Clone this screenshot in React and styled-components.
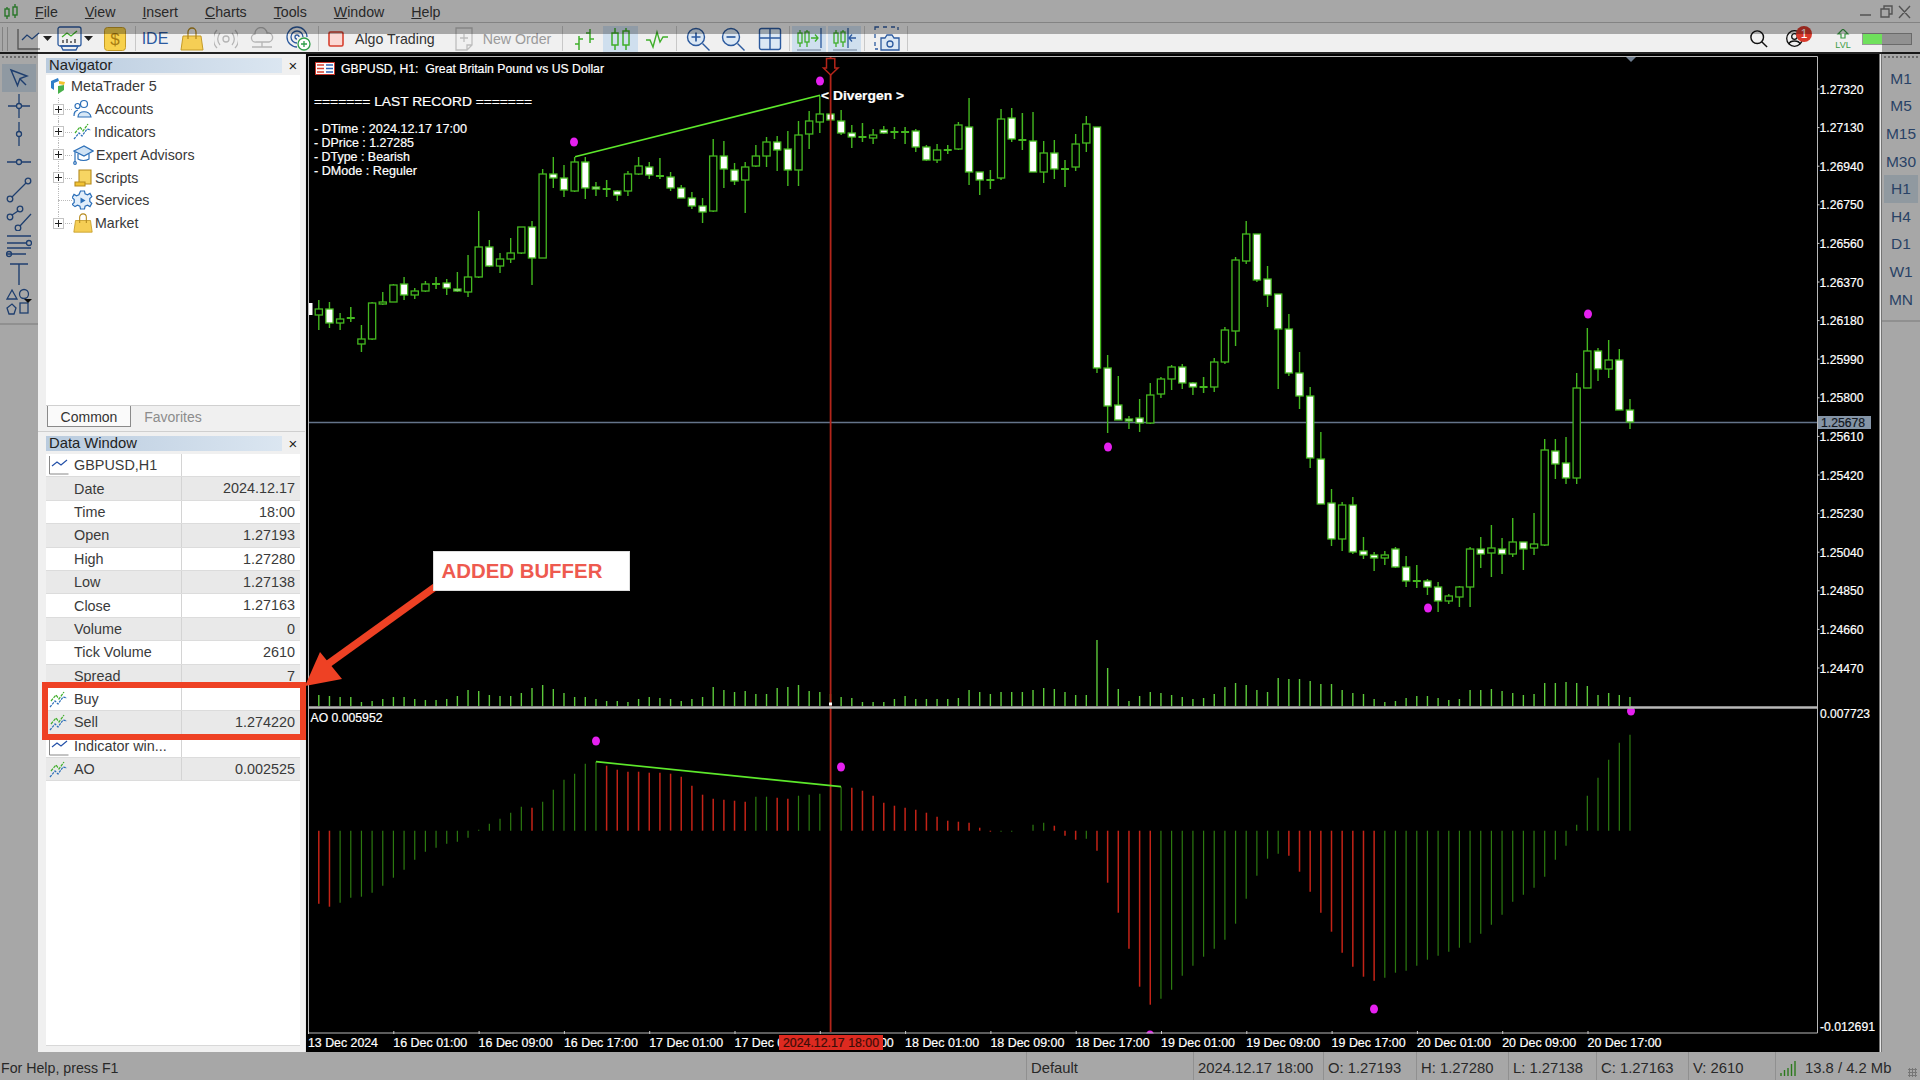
import React from "react";
import styled, { createGlobalStyle } from "styled-components";

const GlobalStyle = createGlobalStyle`
  html, body { margin: 0; padding: 0; background: #f0f0f0; overflow: hidden; }
`;

// [type, high, bodyTop, bodyBottom, low]  type: 0 hollow, 1 white, 2 cross
const CANDLES = [
  [0,300,309,315,330],[1,302,309,323,328],[0,313,319,323,330],[2,307,318,319,322],[0,325,339,344,352],
  [0,302,303,339,340],[0,292,302,304,305],[0,284,285,302,302],[1,277,284,295,300],[0,288,291,295,299],
  [0,281,284,291,292],[2,277,284,284,289],[1,279,283,288,295],[1,272,289,291,292],[0,255,277,292,297],
  [0,211,247,277,278],[1,240,247,266,267],[0,253,259,266,273],[0,238,253,259,263],[0,227,227,253,254],
  [1,221,227,258,285],[0,169,174,258,258],[1,157,174,178,188],[1,165,178,190,197],[0,157,162,191,192],
  [1,157,162,188,199],[1,182,187,189,196],[2,180,189,189,197],[1,190,191,195,201],[0,171,174,191,196],
  [0,157,166,174,175],[1,162,167,175,179],[2,158,176,176,179],[1,172,177,188,191],[1,185,188,198,198],
  [1,192,198,206,209],[1,198,206,212,223],[0,139,156,211,212],[1,141,156,169,188],[1,163,170,181,185],
  [0,162,167,180,213],[0,145,156,166,167],[0,137,142,156,167],[1,136,142,150,171],[1,131,149,170,186],
  [0,121,135,170,186],[0,111,121,134,149],[0,96,114,122,133],[1,114,114,120,120],[1,110,121,133,135],
  [1,125,133,137,148],[2,123,137,137,142],[0,129,135,138,144],[1,126,130,133,134],[2,127,132,132,139],
  [2,127,132,132,144],[1,129,131,147,152],[1,145,147,160,161],[0,144,150,160,163],[2,145,150,150,154],
  [0,122,125,149,150],[1,98,127,172,185],[1,172,172,180,195],[2,170,180,180,189],[0,109,119,178,180],
  [1,108,118,139,142],[2,113,140,140,150],[1,112,141,172,172],[0,141,153,172,183],[1,140,153,169,179],
  [2,160,169,169,187],[0,134,144,167,171],[0,116,124,143,152],[1,127,127,368,373],[1,355,368,406,433],
  [1,376,405,420,420],[1,416,419,421,429],[1,399,418,423,432],[0,383,395,423,424],[0,377,379,394,398],
  [0,365,367,379,390],[1,364,367,383,389],[1,382,383,387,395],[2,377,387,387,393],[0,358,362,387,392],
  [0,327,330,362,364],[0,257,260,331,346],[0,221,234,261,264],[1,234,234,280,282],[1,266,279,295,307],
  [1,294,294,329,389],[1,314,329,373,376],[1,352,373,396,409],[1,387,396,458,468],[1,432,459,504,504],
  [1,489,503,539,546],[0,502,505,539,551],[1,497,505,552,554],[1,537,551,555,559],[1,552,555,558,571],
  [0,551,555,558,565],[1,547,549,567,568],[1,556,567,581,587],[2,565,581,581,588],[1,579,581,587,595],
  [1,582,587,601,612],[0,594,596,601,604],[0,586,587,597,607],[0,547,549,587,607],[1,537,549,554,568],
  [0,525,548,553,577],[1,538,549,554,574],[0,518,542,554,557],[1,542,542,549,570],[0,513,544,548,555],
  [0,439,450,545,546],[1,439,451,464,479],[1,437,463,478,484],[0,373,388,478,484],[0,328,351,388,388],
  [1,348,351,369,381],[0,340,360,369,378],[1,349,360,410,410],[1,399,410,422,429],
];

const VOLUMES = [
  11,10,9,9,4,5,7,9,9,7,6,6,7,10,16,15,11,10,10,13,18,21,17,13,9,9,7,5,5,4,7,9,8,7,5,7,9,19,16,14,15,12,12,18,19,21,15,14,12,
  9,8,4,4,4,7,10,7,7,7,7,8,16,14,12,14,14,14,16,18,17,14,11,11,66,38,17,5,10,14,13,11,9,7,8,12,19,23,21,16,14,28,27,27,25,22,22,
  16,13,12,7,4,5,8,10,10,8,6,7,16,16,17,15,13,11,12,23,23,24,23,20,11,13,11,9,
];

// AO histogram: distance from zero in px (+ is down), r = red
const AO = [
  [73,"r"],[76,"r"],[72],[67],[66],[62],[55],[47],[39],[29],[21],[17],[13],[11],[7],[-1],[-7],[-12],[-18],[-24],[-23,"r"],[-29],
  [-41],[-51],[-57],[-67],[-69],[-65,"r"],[-61,"r"],[-59,"r"],[-59,"r"],[-58,"r"],[-58,"r"],[-57,"r"],[-54,"r"],[-45,"r"],[-36,"r"],
  [-32,"r"],[-31,"r"],[-30,"r"],[-29,"r"],[-34],[-34],[-33,"r"],[-32,"r"],[-35],[-36],[-37],[-41],[-44],[-43,"r"],[-40,"r"],[-35,"r"],
  [-28,"r"],[-25,"r"],[-23,"r"],[-21,"r"],[-18,"r"],[-14,"r"],[-10,"r"],[-9,"r"],[-8,"r"],[-3,"r"],[1,"r"],[1],[1],[0],[-6],[-8],
  [-5,"r"],[5,"r"],[9,"r"],[8],[20,"r"],[52,"r"],[82,"r"],[118,"r"],[156,"r"],[174,"r"],[168],[159],[145],[135],[126],[118],[109],
  [93],[68],[45],[28],[23],[25,"r"],[41,"r"],[61,"r"],[82,"r"],[101,"r"],[122,"r"],[136,"r"],[146,"r"],[150,"r"],[147],[142],[140],
  [135],[129],[125],[121],[117],[112],[103],[94],[84],[71],[64],[57],[46],[29],[15],[-6],[-35],[-53],[-71],[-88],[-96],
];

const TIME_LABELS = [
  "13 Dec 2024","16 Dec 01:00","16 Dec 09:00","16 Dec 17:00","17 Dec 01:00","17 Dec 09:00","17 Dec 17:00","18 Dec 01:00",
  "18 Dec 09:00","18 Dec 17:00","19 Dec 01:00","19 Dec 09:00","19 Dec 17:00","20 Dec 01:00","20 Dec 09:00","20 Dec 17:00",
];

const DOTS = [[574,142],[820,81],[1108,447],[1428,608],[1588,314],[596,741],[841,767],[1374,1009],[1150,1035],[1631,711]];

const barX = (i) => 318.8 + i * 10.66;

const MENU = [["F","ile"],["V","iew"],["I","nsert"],["C","harts"],["T","ools"],["W","indow"],["H","elp"]];
const TIMEFRAMES = ["M1","M5","M15","M30","H1","H4","D1","W1","MN"];

const DATA_ROWS = [
  ["chart","GBPUSD,H1",""],
  [null,"Date","2024.12.17"],
  [null,"Time","18:00"],
  [null,"Open","1.27193"],
  [null,"High","1.27280"],
  [null,"Low","1.27138"],
  [null,"Close","1.27163"],
  [null,"Volume","0"],
  [null,"Tick Volume","2610"],
  [null,"Spread","7"],
  ["ind","Buy",""],
  ["ind","Sell","1.274220"],
  ["chart","Indicator win...",""],
  ["ind","AO","0.002525"],
];

const Page = styled.div`
  position: relative;
  width: 1920px;
  height: 1080px;
  overflow: hidden;
  display: grid;
  grid-template-rows: 23px 31px 998px 28px;
  background: #f0f0f0;
  color: #3a3a3a;
  font-family: "Liberation Sans", Arial, sans-serif;
`;

const MenuBar = styled.div`
  display: flex;
  align-items: center;
  padding: 2px 0 0 3px;
  border-bottom: 1px solid #bcbcbc;
  box-sizing: border-box;
`;

const MenuItem = styled.span`
  font-size: 14.2px;
  margin-left: 27px;
  &:first-of-type { margin-left: 16px; }
`;

const WindowButtons = styled.div`
  margin-left: auto;
  display: flex;
  align-items: center;
  padding-right: 8px;
`;

const Toolbar = styled.div`
  display: flex;
  align-items: center;
  padding: 2px 0 0 2px;
  border-bottom: 2px solid #222;
  box-sizing: border-box;
`;

const Grip = styled.div`
  width: 4px;
  height: 24px;
  border-left: 1px solid #bbb;
  border-right: 1px solid #bbb;
  margin-right: 9px;
`;

const Tool = styled.div`
  flex: none;
  display: flex;
  align-items: center;
  justify-content: center;
  width: ${(p) => p.$w}px;
  height: 26px;
  margin-left: ${(p) => p.$ml || 0}px;
  background: ${(p) => (p.$on ? "#cfdfee" : "transparent")};
`;

const ToolLabel = styled.span`
  flex: none;
  font-size: 14.2px;
  margin-left: ${(p) => p.$ml || 0}px;
  color: ${(p) => (p.$off ? "#9a9a9a" : "#333")};
`;

const IdeLabel = styled.span`
  font-size: 16px;
  color: #2b5aa0;
`;

const ToolSep = styled.div`
  flex: none;
  width: 1px;
  height: 25px;
  margin-left: ${(p) => p.$ml || 0}px;
  background: #c8c8c8;
`;

const ToolRight = styled.div`
  margin-left: auto;
  display: flex;
  align-items: center;
  padding-right: 8px;
`;

const Badge = styled.span`
  position: absolute;
  right: -9px;
  top: -4px;
  width: 16px;
  height: 16px;
  border-radius: 50%;
  background: #d8392b;
  color: #fff;
  font-size: 12px;
  line-height: 16px;
  text-align: center;
`;

const UserBox = styled.div`
  position: relative;
  width: 17px;
  height: 17px;
  margin-left: 18px;
`;

const LevelBar = styled.div`
  width: 50px;
  height: 12px;
  margin-left: 10px;
  background: linear-gradient(to right, #6fe05c 40%, #d0d0d0 40%);
  border: 1px solid #999;
  box-sizing: border-box;
`;

const Body = styled.div`
  display: grid;
  grid-template-columns: 38px 268px 1576px 38px;
  min-height: 0;
`;

const SideBar = styled.div`
  display: flex;
  flex-direction: column;
  align-items: center;
  padding-top: ${(p) => p.$pad}px;
`;

const SideGrip = styled.div`
  position: absolute;
  top: 56px;
  width: 34px;
  height: 3px;
  border-top: 2px dotted #999;
`;

const SideTool = styled.div`
  width: 34px;
  height: 28px;
  display: flex;
  align-items: center;
  justify-content: center;
  background: ${(p) => (p.$on ? "#cddbe9" : "transparent")};
`;

const SideDivider = styled.div`
  width: 100%;
  margin-top: 7px;
  border-top: 2px solid #cfcfcf;
`;

const FrameButton = styled.div`
  width: 34px;
  height: 27.6px;
  display: flex;
  align-items: center;
  justify-content: center;
  font-size: 15.5px;
  color: #3c5f92;
  background: ${(p) => (p.$on ? "#cfdbe6" : "transparent")};
`;

const LeftColumn = styled.div`
  display: flex;
  flex-direction: column;
  min-height: 0;
  border-right: 1px solid #e4e4e4;
`;

const Navigator = styled.section`
  height: 378px;
  padding: 4px 5px 4px 8px;
  box-sizing: border-box;
  display: flex;
  flex-direction: column;
  border-bottom: 1px solid #cfcfcf;
`;

const PanelHeader = styled.div`
  flex: none;
  display: flex;
  align-items: center;
  height: 15px;
  font-size: 14.8px;
  color: #222;
`;

const PanelTitle = styled.div`
  width: 236px;
  height: 100%;
  padding-left: 3px;
  box-sizing: border-box;
  line-height: 15px;
  background: linear-gradient(to right, #b9cbde, #dbe6f1);
`;

const PanelClose = styled.div`
  flex: 1;
  text-align: center;
  font-size: 15px;
  line-height: 15px;
  padding-left: 4px;
`;

const Tree = styled.div`
  flex: 1;
  margin-top: 2px;
  background: #fff;
`;

const TreeRoot = styled.div`
  display: flex;
  align-items: center;
  height: 22.8px;
  padding-left: 3px;
  gap: 4px;
  font-size: 14.4px;
`;

const TreeRow = styled.div`
  position: relative;
  display: flex;
  align-items: center;
  height: 22.8px;
  font-size: 14.2px;
  padding-left: ${(p) => (p.$leaf ? 26 : 7)}px;
  &::before {
    content: "";
    position: absolute;
    left: 12px;
    top: 0;
    height: ${(p) => (p.$last ? "50%" : "100%")};
    border-left: 1px dotted #bbb;
  }
  &::after {
    content: "";
    position: absolute;
    left: 12px;
    top: 50%;
    width: 14px;
    border-top: 1px dotted #bbb;
  }
`;

const Expander = styled.span`
  position: relative;
  z-index: 1;
  width: 11px;
  height: 11px;
  margin-right: 9px;
  box-sizing: border-box;
  border: 1px solid #c4c4c4;
  background: linear-gradient(#222, #222) center / 7px 1px no-repeat,
    linear-gradient(#222, #222) center / 1px 7px no-repeat, #fff;
`;

const TreeLabel = styled.span`
  margin-left: 2px;
`;

const Tabs = styled.div`
  flex: none;
  display: flex;
  height: 21px;
  border-top: 1px solid #d0d0d0;
  font-size: 14px;
`;

const Tab = styled.div`
  display: flex;
  align-items: center;
  justify-content: center;
  padding-top: 1px;
  margin-left: ${(p) => (p.$on ? 1 : 0)}px;
  width: 84px;
  color: ${(p) => (p.$on ? "#333" : "#8c8c8c")};
  background: ${(p) => (p.$on ? "#fafafa" : "transparent")};
  border: ${(p) => (p.$on ? "1px solid #8a8a8a" : "none")};
  border-top: none;
  box-sizing: border-box;
`;

const DataPanel = styled.section`
  flex: 1;
  padding: 4px 5px 6px 8px;
  display: flex;
  flex-direction: column;
  min-height: 0;
`;

const DataBody = styled.div`
  flex: 1;
  margin-top: 3px;
  background: #fff;
  border-bottom: 1px solid #d8d8d8;
`;

const DataRow = styled.div`
  display: grid;
  grid-template-columns: 136px 1fr;
  height: 23.4px;
  box-sizing: border-box;
  font-size: 14.4px;
  line-height: 22px;
  border-bottom: 1px solid #dcdcdc;
  background: ${(p) => (p.$alt ? "#e9e9e9" : "#fff")};
`;

const DataName = styled.div`
  display: flex;
  align-items: center;
  padding-left: 3px;
  border-right: 1px solid #d4d4d4;
  white-space: nowrap;
`;

const IconSlot = styled.span`
  flex: none;
  display: flex;
  align-items: center;
  width: 25px;
`;

const DataValue = styled.div`
  text-align: right;
  padding-right: 5px;
`;

const ChartArea = styled.div`
  background: #000;
  min-height: 0;
`;

const ChartSvg = styled.svg`
  display: block;
  width: 1576px;
  height: 998px;
`;

const ChartText = styled.text`
  font-family: "Liberation Sans", Arial, sans-serif;
  font-size: ${(p) => p.$size || 12.4}px;
  font-weight: ${(p) => (p.$bold ? 700 : 400)};
  fill: ${(p) => p.$fill || "#fff"};
  stroke: ${(p) => p.$fill || "#fff"};
  stroke-width: 0.2px;
  white-space: pre;
`;

const StatusBar = styled.div`
  display: flex;
  align-items: center;
  font-size: 14.2px;
`;

const StatusHelp = styled.div`
  flex: 1;
  padding: 3px 0 0 1px;
`;

const StatusCell = styled.div`
  flex: none;
  display: flex;
  align-items: center;
  gap: 8px;
  width: ${(p) => p.$w}px;
  height: 100%;
  box-sizing: border-box;
  padding: 3px 0 0 4px;
  font-size: 14.8px;
  border-left: 1px solid #cfcfcf;
`;

const Spotlight = styled.div`
  position: absolute;
  left: 38px;
  top: 34px;
  width: 1844px;
  height: 1018px;
  box-shadow: 0 0 0 3000px rgba(0, 0, 0, 0.3);
  pointer-events: none;
`;

const HighlightBox = styled.div`
  position: absolute;
  left: 41.5px;
  top: 681.5px;
  width: 264px;
  height: 58px;
  box-sizing: border-box;
  border: 6.4px solid #ee4124;
  pointer-events: none;
`;

const Callout = styled.div`
  position: absolute;
  left: 432.5px;
  top: 551px;
  width: 197px;
  height: 40px;
  box-sizing: border-box;
  padding-left: 8px;
  line-height: 38px;
  background: #fff;
  border: 1px solid #ddd;
  color: #ee5a4f;
  font-size: 20.4px;
  font-weight: 700;
  white-space: nowrap;
`;

const ArrowSvg = styled.svg`
  position: absolute;
  left: 300px;
  top: 545px;
  width: 145px;
  height: 150px;
  pointer-events: none;
`;

const Svg = ({ s = 24, w, h, view = "0 0 24 24", children, ...rest }) => (
  <svg width={w || s} height={h || s} viewBox={view} fill="none" {...rest}>
    {children}
  </svg>
);

const BLUE = "#2c5a9e";
const GREEN = "#3fae2a";

const CaretDown = () => (
  <Svg w={9} h={5} view="0 0 9 5"><path d="M0 0h9L4.5 5z" fill="#222" /></Svg>
);

const AppLogo = () => (
  <Svg w={16} h={18} view="0 0 16 18" stroke="#3aa83a" strokeWidth="1.4">
    <path d="M4 4v12M12 1v14" /><rect x="2" y="6" width="4" height="7" fill="#f0f0f0" /><rect x="10" y="4" width="4" height="8" fill="#f0f0f0" />
  </Svg>
);

const LineChartIcon = () => (
  <Svg w={24} h={24} stroke={BLUE} strokeWidth="1.3">
    <path d="M1 2v20h22" stroke="#777" /><path d="M5 13l5-5 5 4 7-6" />
  </Svg>
);

const TemplateIcon = () => (
  <Svg w={25} h={26} view="0 0 25 26" stroke={BLUE} strokeWidth="1.3">
    <rect x="1" y="1" width="23" height="19" rx="2" />
    <path d="M5 11l5-4 4 3 6-5" stroke={GREEN} />
    <path d="M6 17v-3M10 17v-4M14 17v-2M18 17v-4" stroke="#333" />
    <path d="M6 24h13l2-4H4z" />
  </Svg>
);

const DollarIcon = () => (
  <Svg w={22} h={24} view="0 0 22 24">
    <rect x=".5" y=".5" width="21" height="23" rx="3" fill="#f7d14c" stroke="#c49b28" />
    <text x="11" y="18" textAnchor="middle" fontSize="17" fontFamily="Liberation Sans" fill="#a87d12">$</text>
  </Svg>
);

const BagIcon = ({ s = 24 }) => (
  <Svg s={s}>
    <path d="M3 9h18l2 14H1z" fill="#f5ce55" stroke="#c49b28" />
    <path d="M8 12V5a4 4 0 018 0v7" stroke="#b58a1e" strokeWidth="1.3" />
  </Svg>
);

const SignalIcon = () => (
  <Svg s={24} stroke="#b5b5b5" strokeWidth="1.3">
    <circle cx="12" cy="12" r="3" />
    <path d="M6 6a9 9 0 000 12M18 6a9 9 0 010 12M3 3a13 13 0 000 18M21 3a13 13 0 010 18" />
  </Svg>
);

const CloudIcon = () => (
  <Svg s={24} stroke="#b5b5b5" strokeWidth="1.3">
    <path d="M6 15a4 4 0 01-1-8 6 6 0 0112-1 4.5 4.5 0 012 9zM12 15v5M2 20h20" />
  </Svg>
);

const GlobePlusIcon = () => (
  <Svg s={25} view="0 0 25 25" stroke={BLUE} strokeWidth="1.3">
    <path d="M11 21a10 10 0 1110-10" /><path d="M11 17a6 6 0 116-6" /><path d="M11 13a2 2 0 112-2" />
    <circle cx="18" cy="18" r="6" fill="#fff" stroke="#2f9e4a" />
    <path d="M18 15v6M15 18h6" stroke="#2f9e4a" />
  </Svg>
);

const AlgoIcon = () => (
  <Svg s={16} view="0 0 16 16"><rect x="1" y="1" width="14" height="14" rx="1.5" fill="#fbd9d4" stroke="#d6402f" strokeWidth="1.6" /></Svg>
);

const OrderIcon = () => (
  <Svg w={18} h={24} view="0 0 18 24" stroke="#bdbdbd" strokeWidth="1.3">
    <path d="M1 1h16v17l-5 5H1zM9 7v8M5 11h8M17 18h-5v5" />
  </Svg>
);

const BarsIcon = () => (
  <Svg s={24} stroke={GREEN} strokeWidth="1.5">
    <path d="M6 9v14M6 17H2M6 12h4M17 2v14M17 6h-4M17 12h4" />
  </Svg>
);

const CandlesIcon = ({ w = 22, h = 24 }) => (
  <Svg w={w} h={h} view="0 0 22 24" stroke={GREEN} strokeWidth="1.5">
    <path d="M5 1v22M16 1v22" /><rect x="2" y="6" width="6" height="12" fill="#cfdfee" /><rect x="13" y="4" width="6" height="14" fill="#cfdfee" />
  </Svg>
);

const ZigZagIcon = () => (
  <Svg s={24} stroke={GREEN} strokeWidth="1.4"><path d="M1 13h4l3 7 4-15 3 10 3-5h5" /></Svg>
);

const ZoomIcon = ({ plus }) => (
  <Svg s={24} stroke={BLUE} strokeWidth="1.4">
    <circle cx="10" cy="10" r="8.5" fill="#dce8f4" />
    <path d="M16.5 16.5l7 7" />
    <path d={plus ? "M10 5.5v9M5.5 10h9" : "M5.5 10h9"} strokeWidth="1.7" />
  </Svg>
);

const TileIcon = () => (
  <Svg s={24} stroke={BLUE} strokeWidth="1.4">
    <rect x="1.5" y="1.5" width="21" height="21" rx="2" fill="#dce8f4" /><path d="M1.5 11h21M12 1.5v21" />
  </Svg>
);

const ScrollIcon = ({ back }) => (
  <Svg w={26} h={24} view="0 0 26 24">
    <g stroke={GREEN} strokeWidth="1.3" fill="#cfdfee">
      <path d="M4 3v17M11 3v17" /><rect x="2" y="6" width="4" height="10" /><rect x="9" y="5" width="4" height="10" />
    </g>
    <path d={back ? "M24 11h-7m3-3.500l-3 3.500 3 3.500" : "M15 11h7m-3-3.500l3 3.500-3 3.500"} stroke={back ? BLUE : GREEN} strokeWidth="1.3" />
    <path d={back ? "M16 1v20" : "M25 1v20"} stroke={BLUE} strokeWidth="1.3" />
    <path d="M1 23h24" stroke="#8a9bb0" strokeWidth="1.4" />
  </Svg>
);

const ShotIcon = () => (
  <Svg w={27} h={26} view="0 0 27 26" stroke={BLUE} strokeWidth="1.3">
    <path d="M1 4V1h4M9 1h4M17 1h4M24 1v3M1 8v4M1 16v4M1 23h3" />
    <path d="M7 12h4l2-3h5l2 3h5v12H7z" fill="#dce8f4" />
    <circle cx="16" cy="18" r="3" />
  </Svg>
);

const SearchIcon = () => (
  <Svg s={18} view="0 0 20 20" stroke="#111" strokeWidth="1.6"><circle cx="8" cy="8" r="7" /><path d="M13 13l6 6" /></Svg>
);

const UserIcon = () => (
  <Svg s={17} view="0 0 17 17" stroke="#111" strokeWidth="1.3">
    <circle cx="8.500" cy="8.500" r="7.800" /><circle cx="8.500" cy="6.500" r="2.800" /><path d="M3 14c1-4 10-4 11 0" />
  </Svg>
);

const LevelIcon = () => (
  <Svg w={18} h={20} view="0 0 18 20">
    <path d="M9 0l5 5h-3v4H7V5H4z" fill="none" stroke="#3c9c45" strokeWidth="1.2" />
    <text x="9" y="19" textAnchor="middle" fontSize="9" fontFamily="Liberation Sans" fill="#3c9c45">LVL</text>
  </Svg>
);

const CursorTool = () => (
  <Svg s={20} view="0 0 20 20" stroke={BLUE} strokeWidth="1.4"><path d="M2 2l16 6-7 2.500-2.500 7z" /><path d="M11 11l6 6" /></Svg>
);
const CrossTool = () => (
  <Svg s={24} stroke={BLUE} strokeWidth="1.3"><circle cx="12" cy="12" r="2.500" /><path d="M12 0v9.500M12 14.500V24M1 12h8.500M14.500 12H23" /></Svg>
);
const VLineTool = () => (
  <Svg s={24} stroke={BLUE} strokeWidth="1.3"><circle cx="12" cy="12" r="2.500" /><path d="M12 0v9.500M12 14.500V24" /></Svg>
);
const HLineTool = () => (
  <Svg s={24} stroke={BLUE} strokeWidth="1.3"><circle cx="12" cy="12" r="2.500" /><path d="M0 12h9.500M14.500 12H24" /></Svg>
);
const TrendTool = () => (
  <Svg s={26} view="0 0 26 26" stroke={BLUE} strokeWidth="1.3"><circle cx="4" cy="22" r="2.800" /><circle cx="22" cy="4" r="2.800" /><path d="M6 20L20 6" /></Svg>
);
const FiboTool = () => (
  <Svg s={26} view="0 0 26 26" stroke={BLUE} strokeWidth="1.3"><circle cx="4" cy="12" r="2.800" /><circle cx="14" cy="4" r="2.800" /><circle cx="12" cy="23" r="2.800" /><path d="M6 10l6-4M14 21L25 9" /></Svg>
);
const ChannelTool = () => (
  <Svg s={26} view="0 0 26 26" stroke={BLUE} strokeWidth="1.3"><path d="M1 3h24M1 10h19M1 21h19M1 15h24" /><circle cx="23" cy="10" r="2.500" /><circle cx="3" cy="21" r="2.500" /></Svg>
);
const TextTool = () => (
  <Svg s={24} stroke={BLUE} strokeWidth="1.4"><path d="M3 2h18M12 2v21" /></Svg>
);
const ShapesTool = () => (
  <Svg s={28} view="0 0 28 28" stroke={BLUE} strokeWidth="1.3">
    <path d="M7 2l5 9H2z" /><circle cx="19" cy="6" r="4.500" /><path d="M2 20l5-4 4 4-2 6H4z" /><rect x="15" y="15" width="8" height="10" />
    <path d="M19 11h8l-4 4z" fill="#111" stroke="none" />
  </Svg>
);

const MtLogo = () => (
  <Svg s={18} view="0 0 18 18">
    <path d="M9 1L2 4v7l3 2V6l5-2z" fill="#2f7fc9" /><path d="M10 4l6 1-1 3-5-1z" fill="#f2c12e" />
    <path d="M15 8v5l-6 4V9z" fill="#47b04b" />
  </Svg>
);

const AccountsIcon = () => (
  <Svg s={20} view="0 0 20 20" stroke="#2c6fb8" strokeWidth="1.2">
    <circle cx="11" cy="5" r="3.500" /><circle cx="4.500" cy="7" r="2.500" />
    <path d="M5 18c0-7 12-7 13 0zM1 17c0-4 1-5 4-6" fill="#d8e8f6" />
  </Svg>
);

const IndicatorIcon = () => (
  <Svg s={19} view="0 0 19 19" strokeWidth="1.2">
    <path d="M1 17l5-6 3 3 5-7 4 1" stroke="#2c6fb8" strokeDasharray="2.500 1" />
    <path d="M2 11l5-6 3 4 5-7" stroke="#3fae2a" strokeDasharray="3 1" />
  </Svg>
);

const AdvisorIcon = () => (
  <Svg s={21} view="0 0 21 21" stroke="#2c6fb8" strokeWidth="1.2">
    <path d="M1 7l10-5 9 5-9 5z" fill="#cfe2f4" /><path d="M5 10v5c3 2 8 2 11 0v-5M2 8v10" />
    <circle cx="2" cy="19" r="1.300" />
  </Svg>
);

const ScriptIcon = () => (
  <Svg s={20} view="0 0 20 20" stroke="#b58a1e" strokeWidth="1.100">
    <path d="M6 2h12v14H6z" fill="#f7d563" /><path d="M2 14h10v4H2z" fill="#f1c232" />
  </Svg>
);

const ServiceIcon = () => (
  <Svg s={21} view="0 0 21 21" stroke="#2c6fb8" strokeWidth="1.200">
    <path d="M8.500 1h4l.6 2.800 2.400 1 2.500-1.400 1.800 3.200-2 2v2.800l2 2-1.800 3.200-2.500-1.400-2.400 1-.6 2.800h-4l-.6-2.800-2.400-1-2.500 1.400L.2 14.400l2-2V9.600l-2-2L2 4.400l2.500 1.400 2.400-1z" fill="#e2eefa" />
    <path d="M8.500 7.500v6l5-3z" fill="#2c6fb8" stroke="none" />
  </Svg>
);

const SmallLineIcon = () => (
  <Svg s={20} view="0 0 20 20"><path d="M.5 1v18h19" stroke="#888" /><path d="M3 11l5-4 4 3 6-5" stroke="#2350a8" strokeWidth="1.200" /></Svg>
);

const StatusBars = () => (
  <Svg w={17} h={16} view="0 0 17 16" stroke="#3fae2a" strokeWidth="1.400">
    <path d="M1 16v-3M4.500 16v-6M8 16V8M11.500 16V4M15 16V1" />
  </Svg>
);

const StatusGrip = styled.div`
  width: 9px;
  height: 9px;
  margin-left: auto;
  margin-right: 3px;
  align-self: flex-end;
  margin-bottom: 3px;
  background: radial-gradient(#aaa 1px, transparent 1.200px) 0 0 / 3px 3px;
`;

const Candle = ({ c, i }) => {
  const [type, hi, top, bot, lo] = c;
  const x = barX(i);
  const green = "#44b81f";
  if (type === 2) {
    return (
      <g stroke={green} strokeWidth="1.500">
        <path d={`M${x} ${hi}V${lo}`} />
        <path d={`M${x - 4} ${top}H${x + 4}`} strokeWidth="2" />
      </g>
    );
  }
  return (
    <g stroke={green}>
      <path d={`M${x} ${hi}V${lo}`} strokeWidth="1.400" />
      <rect x={x - 3.6} y={top} width="7.200" height={Math.max(bot - top, 2)} fill={type ? "#fff" : "#000"} strokeWidth="1.300" />
    </g>
  );
};

const PriceChart = () => (
  <ChartSvg viewBox="306 54 1576 998">
    <rect x="309" y="303" width="3.500" height="12" fill="#fff" />
    <path d="M309 422.500H1817" stroke="#64748a" strokeWidth="1.600" />

    {CANDLES.map((c, i) => <Candle key={i} c={c} i={i} />)}

    {VOLUMES.map((h, i) => (
      <path key={i} d={`M${barX(i)} 706V${706 - h}`} stroke="#5cc93a" strokeWidth="1.400" />
    ))}

    {AO.map(([v, col], i) => (
      v !== 0 && <path key={i} d={`M${barX(i)} 830.700V${830.7 + v}`} stroke={col ? "#c42317" : "#2c7a10"} strokeWidth={col ? 1.5 : 1.2} />
    ))}

    <path d="M830.600 57V1032" stroke="#b3251a" strokeWidth="1.800" />
    <path d="M826.500 58.500H834.800V68H838L830.700 75 823.500 68H826.500Z" fill="#000" stroke="#b3251a" strokeWidth="1.500" />
    <path d="M1626 57H1636L1631 62Z" fill="#6f7e90" />

    {/* divergence lines */}
    <path d="M575 156.700L820 95.300" stroke="#5de82b" strokeWidth="1.700" />
    <path d="M596 761.700L841 786.700" stroke="#5de82b" strokeWidth="1.700" />

    {DOTS.map(([x, y], i) => <ellipse key={i} cx={x} cy={y} rx="4" ry="4.500" fill="#e620f0" />)}

    {/* the axis strip hides whatever runs past the plot */}
    <rect x="306" y="1033.500" width="1511" height="18.500" fill="#000" />
    <g stroke="#b8b8b8" fill="none">
      <path d="M308.500 56.500H1817.500V1033H308.500Z" />
      <path d="M308 707.500H1817" strokeWidth="2.400" />
      <path d="M1880.500 54V1052" stroke="#e8e8e8" strokeWidth="2" />
    </g>
    <rect x="829" y="702.500" width="3" height="3" fill="#fff" />

    {/* title */}
    <rect x="315.500" y="62.500" width="19" height="12" fill="#fff" stroke="#c8352a" />
    <path d="M317 65h7M317 68.500h7M317 72h7" stroke="#d6402f" strokeWidth="1.500" />
    <path d="M326 65h7M326 68.500h7M326 72h7" stroke="#2e63b5" strokeWidth="1.500" />
    <ChartText x="341" y="72.500" textLength="263" lengthAdjust="spacingAndGlyphs">{"GBPUSD, H1:  Great Britain Pound vs US Dollar"}</ChartText>
    <ChartText x="314" y="105.500" textLength="218" lengthAdjust="spacingAndGlyphs">======= LAST RECORD =======</ChartText>
    <ChartText x="314" y="133" textLength="153" lengthAdjust="spacingAndGlyphs">- DTime : 2024.12.17 17:00</ChartText>
    <ChartText x="314" y="147" textLength="100" lengthAdjust="spacingAndGlyphs">- DPrice : 1.27285</ChartText>
    <ChartText x="314" y="160.500" textLength="96" lengthAdjust="spacingAndGlyphs">- DType : Bearish</ChartText>
    <ChartText x="314" y="174.500" textLength="103" lengthAdjust="spacingAndGlyphs">- DMode : Reguler</ChartText>
    <ChartText x="821" y="99.500" $bold textLength="83" lengthAdjust="spacingAndGlyphs">{"< Divergen >"}</ChartText>
    <ChartText x="310.500" y="721.500" textLength="72" lengthAdjust="spacingAndGlyphs">AO 0.005952</ChartText>

    {/* price axis */}
    {Array.from({ length: 16 }, (_, i) => {
      const y = 89 + i * 38.6;
      return (
        <g key={i}>
          <path d={`M1817 ${y}h2.500`} stroke="#ccc" />
          <ChartText x="1819.500" y={y + 4.5} textLength="44" lengthAdjust="spacingAndGlyphs">{(1.2732 - i * 0.0019).toFixed(5)}</ChartText>
        </g>
      );
    })}
    <rect x="1818" y="416" width="53" height="13" fill="#8494a6" />
    <ChartText x="1821" y="427" $fill="#10161d" textLength="44" lengthAdjust="spacingAndGlyphs">1.25678</ChartText>
    <ChartText x="1820" y="718" textLength="50" lengthAdjust="spacingAndGlyphs">0.007723</ChartText>
    <ChartText x="1820" y="1031" textLength="55" lengthAdjust="spacingAndGlyphs">-0.012691</ChartText>

    {/* time axis */}
    {TIME_LABELS.map((t, i) => {
      const x = 308 + i * 85.3;
      return (
        <g key={t}>
          <path d={`M${x + 0.5} 1031v3`} stroke="#ccc" />
          <ChartText x={x} y="1046.500" textLength={i === 0 ? 70 : 74} lengthAdjust="spacingAndGlyphs">{t}</ChartText>
        </g>
      );
    })}
    <rect x="779" y="1035" width="104" height="15" fill="#dd2a20" />
    <ChartText x="783" y="1046.500" $fill="#3a0d08" textLength="96" lengthAdjust="spacingAndGlyphs">2024.12.17 18:00</ChartText>
  </ChartSvg>
);

const NAV_ITEMS = [
  [<AccountsIcon />, "Accounts"],
  [<IndicatorIcon />, "Indicators"],
  [<AdvisorIcon />, "Expert Advisors"],
  [<ScriptIcon />, "Scripts"],
  [<ServiceIcon />, "Services", true],
  [<BagIcon s={20} />, "Market"],
];

const SIDE_TOOLS = [CursorTool, CrossTool, VLineTool, HLineTool, TrendTool, FiboTool, ChannelTool, TextTool, ShapesTool];

export default function App() {
  return (
    <Page>
      <GlobalStyle />
      <MenuBar>
        <AppLogo />
        {MENU.map(([k, rest]) => (
          <MenuItem key={k}><u>{k}</u>{rest}</MenuItem>
        ))}
        <WindowButtons>
          <Svg w={54} h={14} view="0 0 50 14" stroke="#777" strokeWidth="1.400">
            <path d="M0 10h11M21 4h8v8h-8zM24 4V1h8v8h-3M39 1l11 12M50 1L39 13" />
          </Svg>
        </WindowButtons>
      </MenuBar>

      <Toolbar>
        <Grip />
        <Tool $w={24}><LineChartIcon /></Tool>
        <Tool $w={9} $ml={2}><CaretDown /></Tool>
        <Tool $w={25} $ml={5}><TemplateIcon /></Tool>
        <Tool $w={9} $ml={2}><CaretDown /></Tool>
        <Tool $w={22} $ml={11}><DollarIcon /></Tool>
        <ToolSep $ml={9} />
        <Tool $w={24} $ml={7}><IdeLabel>IDE</IdeLabel></Tool>
        <Tool $w={24} $ml={13}><BagIcon /></Tool>
        <Tool $w={25} $ml={9}><SignalIcon /></Tool>
        <Tool $w={24} $ml={12}><CloudIcon /></Tool>
        <Tool $w={25} $ml={12}><GlobePlusIcon /></Tool>
        <ToolSep $ml={7} />
        <Tool $w={16} $ml={9}><AlgoIcon /></Tool>
        <ToolLabel $ml={11}>Algo Trading</ToolLabel>
        <Tool $w={18} $ml={20}><OrderIcon /></Tool>
        <ToolLabel $ml={10} $off>New Order</ToolLabel>
        <ToolSep $ml={11} />
        <Tool $w={24} $ml={10}><BarsIcon /></Tool>
        <Tool $w={35} $ml={6} $on><CandlesIcon /></Tool>
        <Tool $w={24} $ml={7}><ZigZagIcon /></Tool>
        <ToolSep $ml={7} />
        <Tool $w={24} $ml={9}><ZoomIcon plus /></Tool>
        <Tool $w={24} $ml={11}><ZoomIcon /></Tool>
        <Tool $w={24} $ml={13}><TileIcon /></Tool>
        <ToolSep $ml={7} />
        <Tool $w={34} $ml={2} $on><ScrollIcon /></Tool>
        <Tool $w={33} $ml={2} $on><ScrollIcon back /></Tool>
        <ToolSep $ml={3} />
        <Tool $w={27} $ml={9}><ShotIcon /></Tool>
        <ToolSep $ml={6} />
        <ToolRight>
          <SearchIcon />
          <UserBox><UserIcon /><Badge>1</Badge></UserBox>
          <Tool $w={18} $ml={31}><LevelIcon /></Tool>
          <LevelBar />
        </ToolRight>
      </Toolbar>

      <Body>
        <SideBar $pad={10}>
          <SideGrip />
          {SIDE_TOOLS.map((Icon, i) => (
            <SideTool key={i} $on={i === 0}><Icon /></SideTool>
          ))}
          <SideDivider />
        </SideBar>

        <LeftColumn>
          <Navigator>
            <PanelHeader><PanelTitle>Navigator</PanelTitle><PanelClose>×</PanelClose></PanelHeader>
            <Tree>
              <TreeRoot><MtLogo />MetaTrader 5</TreeRoot>
              {NAV_ITEMS.map(([icon, label, leaf], i) => (
                <TreeRow key={label} $leaf={leaf} $last={i === NAV_ITEMS.length - 1}>
                  {!leaf && <Expander />}
                  {icon}
                  <TreeLabel>{label}</TreeLabel>
                </TreeRow>
              ))}
            </Tree>
            <Tabs>
              <Tab $on>Common</Tab>
              <Tab>Favorites</Tab>
            </Tabs>
          </Navigator>
          <DataPanel>
            <PanelHeader><PanelTitle>Data Window</PanelTitle><PanelClose>×</PanelClose></PanelHeader>
            <DataBody>
              {DATA_ROWS.map(([icon, name, val], i) => (
                <DataRow key={name} $alt={i % 2 === 1}>
                  <DataName>
                    <IconSlot>
                      {icon === "chart" && <SmallLineIcon />}
                      {icon === "ind" && <IndicatorIcon />}
                    </IconSlot>
                    {name}
                  </DataName>
                  <DataValue>{val}</DataValue>
                </DataRow>
              ))}
            </DataBody>
          </DataPanel>
        </LeftColumn>

        <ChartArea><PriceChart /></ChartArea>

        <SideBar $pad={11}>
          <SideGrip />
          {TIMEFRAMES.map((t) => (
            <FrameButton key={t} $on={t === "H1"}>{t}</FrameButton>
          ))}
          <SideDivider />
        </SideBar>
      </Body>

      <StatusBar>
        <StatusHelp>For Help, press F1</StatusHelp>
        <StatusCell $w={167}>Default</StatusCell>
        <StatusCell $w={130}>2024.12.17 18:00</StatusCell>
        <StatusCell $w={93}>O: 1.27193</StatusCell>
        <StatusCell $w={92}>H: 1.27280</StatusCell>
        <StatusCell $w={88}>L: 1.27138</StatusCell>
        <StatusCell $w={92}>C: 1.27163</StatusCell>
        <StatusCell $w={87}>V: 2610</StatusCell>
        <StatusCell $w={145}><StatusBars />13.8 / 4.2 Mb<StatusGrip /></StatusCell>
      </StatusBar>

      <Spotlight />
      <HighlightBox />
      <ArrowSvg viewBox="300 545 145 150">
        <path d="M435 587L328 664" stroke="#ee4124" strokeWidth="7.500" />
        <path d="M305 686L320 652 342 679Z" fill="#ee4124" />
      </ArrowSvg>
      <Callout>ADDED BUFFER</Callout>
    </Page>
  );
}
